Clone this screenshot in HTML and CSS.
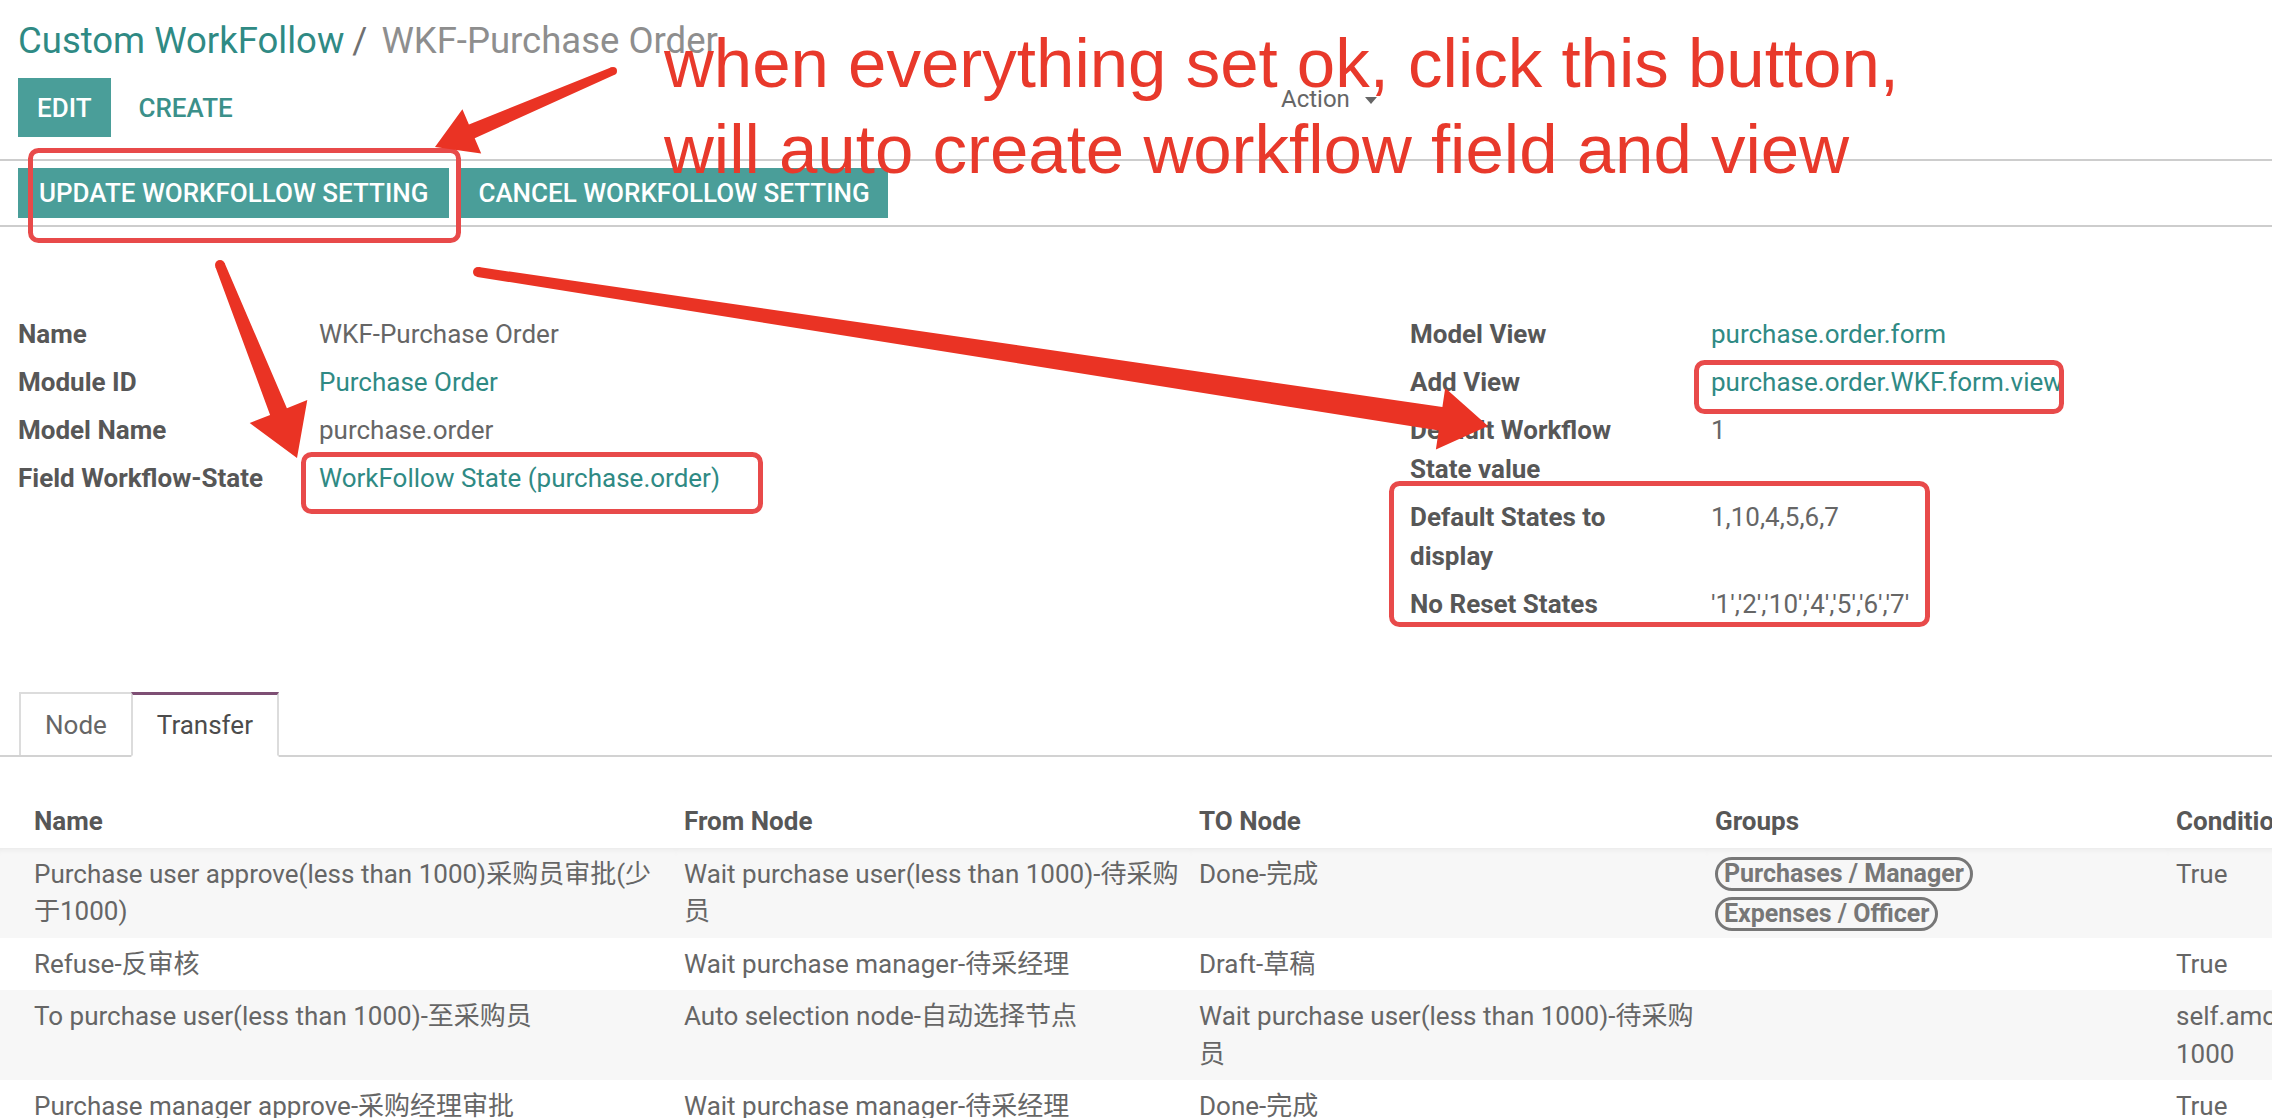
FILE: index.html
```html
<!DOCTYPE html>
<html>
<head>
<meta charset="utf-8">
<title>WKF-Purchase Order</title>
<link rel="stylesheet" href="styles.css">
</head>
<body>
<div class="page">
  <div class="control-panel">
    <ol class="breadcrumb">
      <li class="bc-link">Custom WorkFollow</li>
      <li class="bc-sep">/</li>
      <li class="bc-active">WKF-Purchase Order</li>
    </ol>
    <div class="cp-row">
      <div class="cp-buttons">
        <button class="btn btn-primary btn-edit">Edit</button>
        <button class="btn btn-link">Create</button>
      </div>
      <div class="cp-sidebar"><span>Action</span><span class="caret"></span></div>
    </div>
  </div>

  <div class="statusbar">
    <button class="btn btn-primary btn-status">Update WorkFollow Setting</button>
    <button class="btn btn-primary btn-status btn-cancel">Cancel WorkFollow Setting</button>
  </div>

  <div class="sheet">
    <div class="groups">
      <table class="grp">
        <tr><td class="lbl">Name</td><td class="val">WKF-Purchase Order</td></tr>
        <tr><td class="lbl">Module ID</td><td class="val link">Purchase Order</td></tr>
        <tr><td class="lbl">Model Name</td><td class="val">purchase.order</td></tr>
        <tr><td class="lbl">Field Workflow-State</td><td class="val link">WorkFollow State (purchase.order)</td></tr>
      </table>
      <table class="grp">
        <tr><td class="lbl">Model View</td><td class="val link">purchase.order.form</td></tr>
        <tr><td class="lbl">Add View</td><td class="val link">purchase.order.WKF.form.view</td></tr>
        <tr><td class="lbl">Default Workflow State value</td><td class="val">1</td></tr>
        <tr><td class="lbl">Default States to display</td><td class="val">1,10,4,5,6,7</td></tr>
        <tr><td class="lbl">No Reset States</td><td class="val">'1','2','10','4','5','6','7'</td></tr>
      </table>
    </div>

    <div class="notebook">
      <ul class="tabs">
        <li class="tab">Node</li>
        <li class="tab active">Transfer</li>
      </ul>
      <table class="list">
        <colgroup>
          <col class="c-name"><col class="c-from"><col class="c-to"><col class="c-groups"><col class="c-cond">
        </colgroup>
        <thead>
          <tr><th class="first">Name</th><th>From Node</th><th>TO Node</th><th>Groups</th><th>Condition</th></tr>
        </thead>
        <tbody>
          <tr class="odd top">
            <td class="first">Purchase user approve(less than 1000)采购员审批(少于1000)</td>
            <td>Wait purchase user(less than 1000)-待采购员</td>
            <td>Done-完成</td>
            <td><div class="tags"><span class="tag">Purchases / Manager</span><span class="tag">Expenses / Officer</span></div></td>
            <td>True</td>
          </tr>
          <tr>
            <td class="first">Refuse-反审核</td>
            <td>Wait purchase manager-待采经理</td>
            <td>Draft-草稿</td>
            <td></td>
            <td>True</td>
          </tr>
          <tr class="odd">
            <td class="first">To purchase user(less than 1000)-至采购员</td>
            <td>Auto selection node-自动选择节点</td>
            <td>Wait purchase user(less than 1000)-待采购员</td>
            <td></td>
            <td>self.amount_total &lt; 1000</td>
          </tr>
          <tr>
            <td class="first">Purchase manager approve-采购经理审批</td>
            <td>Wait purchase manager-待采经理</td>
            <td>Done-完成</td>
            <td></td>
            <td>True</td>
          </tr>
        </tbody>
      </table>
    </div>
  </div>
</div>

<svg class="overlay" width="2272" height="1118" viewBox="0 0 2272 1118" xmlns="http://www.w3.org/2000/svg">
  <g class="boxes">
    <rect x="30.5" y="150.5" width="428" height="90" rx="8"/>
    <rect x="303.5" y="454.5" width="457" height="57" rx="8"/>
    <rect x="1696.5" y="362.5" width="365" height="49" rx="8"/>
    <rect x="1391.5" y="483.5" width="536" height="141" rx="8"/>
  </g>
  <g class="arrows">
    <circle cx="613" cy="71" r="4"/>
    <polygon points="611.4,67.3 468.9,124.4 462.4,109.2 435,147 481.2,153.4 474.7,138.2 614.6,74.7"/>
    <circle cx="220" cy="265" r="5"/>
    <polygon points="215.4,266.9 270.1,414.9 249.7,423.1 297,458 307.3,400.1 286.9,408.3 224.6,263.1"/>
    <circle cx="478" cy="272" r="5"/>
    <polygon points="477.2,276.9 1438.7,430.6 1435.9,449.4 1488,426 1445.2,388.1 1442.4,406.9 478.8,267.1"/>
  </g>
</svg>
<div class="note">when everything set ok, click this button,<br>will auto create workflow field and view</div>
</body>
</html>
```

FILE: styles.css
```css
html, body {
  margin: 0;
  padding: 0;
  overflow: hidden;
  background: #ffffff;
}

body {
  position: relative;
  width: 2272px;
  height: 1118px;
  font-family: Roboto, "Noto Sans CJK SC", sans-serif;
  font-size: 26px;
  color: #666666;
}

.page {
  width: 2820px;
}

/* ---------- control panel ---------- */
.control-panel {
  padding: 18px 0 22px 18px;
  border-bottom: 2px solid #cdcdcd;
}

.breadcrumb {
  display: flex;
  margin: 0;
  padding: 0;
  list-style: none;
  font-size: 36.5px;
  line-height: 46px;
}

.bc-link {
  color: #2f8a84;
}

.bc-sep {
  color: #707070;
  padding: 0 14px 0 8px;
}

.bc-active {
  color: #8e8e8e;
}

.cp-row {
  display: flex;
  margin-top: 14px;
  height: 59px;
}

.cp-buttons {
  display: flex;
  gap: 9px;
  width: 1263px;
}

.btn {
  font-family: Roboto, sans-serif;
  font-size: 26px;
  font-weight: 500;
  text-transform: uppercase;
  border: 0;
  margin: 0;
  cursor: pointer;
}

.btn-primary {
  background: #4a9e99;
  color: #ffffff;
}

.btn-edit {
  height: 59px;
  padding: 0 19px;
}

.btn-link {
  background: transparent;
  color: #3b908a;
  height: 59px;
  padding: 0 19px;
}

.cp-sidebar {
  align-self: flex-start;
  margin-top: 6px;
  display: flex;
  align-items: center;
  font-size: 24px;
  line-height: 30px;
  color: #666666;
}

.caret {
  display: inline-block;
  margin-left: 15px;
  margin-top: 2px;
  width: 0;
  height: 0;
  border-top: 7px solid #666666;
  border-left: 6px solid transparent;
  border-right: 6px solid transparent;
}

/* ---------- status bar ---------- */
.statusbar {
  display: flex;
  gap: 11px;
  padding: 7px 0 7px 18px;
  border-bottom: 2px solid #cdcdcd;
}

.btn-status {
  height: 50px;
  padding: 0 21px;
  font-size: 26px;
}

.btn-cancel {
  padding: 0 18px;
}

/* ---------- sheet ---------- */
.sheet {
  padding-top: 84px;
}

.groups {
  display: flex;
  align-items: flex-start;
  padding-left: 18px;
}

.grp {
  width: 1392px;
  border-collapse: collapse;
}

.grp td {
  padding: 4px 0 5px 0;
  line-height: 39px;
  vertical-align: top;
}

.grp .lbl {
  box-sizing: border-box;
  width: 301px;
  padding-right: 36px;
  font-weight: bold;
  color: #575757;
}

.grp .val {
  color: #666666;
}

.link {
  color: #2f8a84 !important;
}

/* ---------- notebook ---------- */
.notebook {
  margin-top: 63px;
}

.tabs {
  display: flex;
  margin: 0;
  padding: 0 0 0 19px;
  list-style: none;
  border-bottom: 2px solid #d2d2d2;
}

.tab {
  padding: 12px 24px 10px 24px;
  line-height: 39px;
  border-top: 2px solid #dcdcdc;
  border-left: 2px solid #dcdcdc;
  color: #666666;
}

.tab.active {
  border-left: 2px solid #dcdcdc;
  border-right: 2px solid #dcdcdc;
  border-top: 3px solid #7e4f74;
  border-bottom: 2px solid #ffffff;
  padding-top: 11px;
  margin-bottom: -2px;
  color: #4c4c4c;
  background: #ffffff;
}

.list {
  margin-top: 38px;
  width: 2428px;
  table-layout: fixed;
  border-collapse: collapse;
}

.c-name { width: 676px; }
.c-from { width: 515px; }
.c-to { width: 516px; }
.c-groups { width: 461px; }
.c-cond { width: 260px; }

.list th,
.list td {
  padding: 8px 0 7px 8px;
  line-height: 37.5px;
  text-align: left;
  vertical-align: top;
}

.list th {
  font-weight: bold;
  color: #575757;
}

.list .first {
  padding-left: 34px;
  padding-right: 12px;
}

.list td {
  color: #666666;
}

.list tr.odd td {
  background: #f7f7f7;
}

.list tr.top td {
  box-shadow: inset 0 6px 6px -5px rgba(0, 0, 0, 0.07);
}

.tags {
  display: flex;
  flex-direction: column;
  align-items: flex-start;
  gap: 6px;
  padding-top: 1px;
}

.tag {
  display: block;
  border: 3px solid #777777;
  border-radius: 18px;
  padding: 0 6px;
  font-size: 25px;
  font-weight: bold;
  line-height: 28px;
  color: #777777;
}

/* ---------- annotations ---------- */
.overlay {
  position: absolute;
  left: 0;
  top: 0;
  pointer-events: none;
}

.boxes rect {
  fill: none;
  stroke: #e84a4a;
  stroke-width: 5;
}

.arrows circle,
.arrows polygon {
  fill: #ea3324;
}

.note {
  position: absolute;
  left: 664px;
  top: 21px;
  font-family: "Liberation Sans", Arial, sans-serif;
  font-size: 69px;
  line-height: 86px;
  color: #e8392b;
  white-space: nowrap;
  pointer-events: none;
}
```
